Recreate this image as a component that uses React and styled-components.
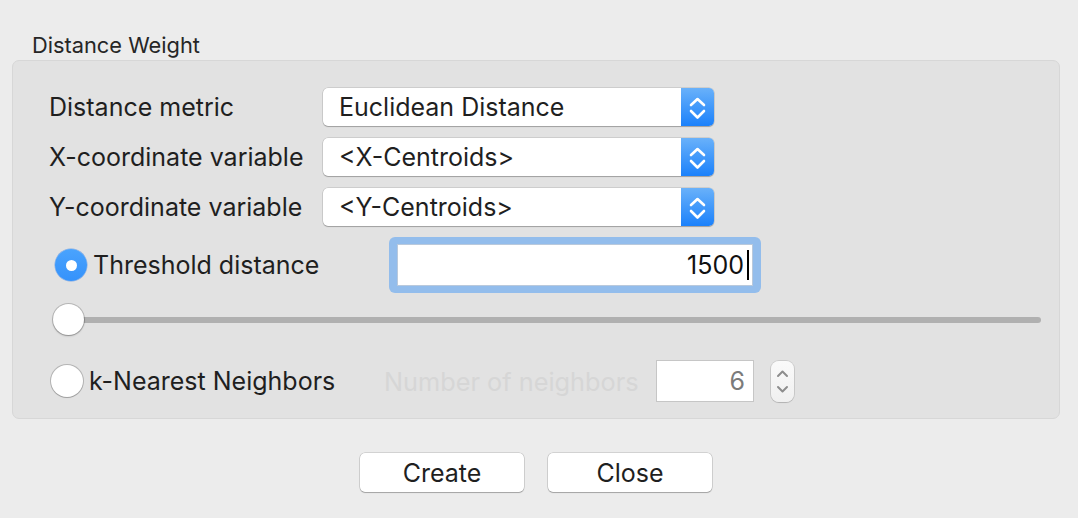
import React from 'react';
import styled, { createGlobalStyle } from 'styled-components';

const FONT = `Inter, "Liberation Sans", Arial, sans-serif`;

const GlobalStyle = createGlobalStyle`
  html, body {
    margin: 0;
    padding: 0;
    background: #ececec;
  }
  body {
    font-family: ${FONT};
    color: #222;
    -webkit-font-smoothing: antialiased;
  }
`;

const Page = styled.div`
  width: 1078px;
  height: 518px;
  padding-top: 31px;
  box-sizing: border-box;
  background: #ececec;
`;

const GroupTitle = styled.div`
  margin-left: 32px;
  font-size: 21.8px;
  line-height: 29px;
  color: #262626;
`;

const GroupBox = styled.div`
  margin-left: 12px;
  width: 1048px;
  height: 359px;
  box-sizing: border-box;
  padding: 26px 18px 0 37px;
  background: #e2e2e2;
  border: 1px solid #d7d7d7;
  border-radius: 7px;
  display: flex;
  flex-direction: column;
`;

const Row = styled.div`
  display: flex;
  align-items: center;
  height: ${p => p.$h}px;
  margin-top: ${p => p.$mt || 0}px;
  padding-left: ${p => p.$pl || 0}px;
`;

const Label = styled.div`
  width: 273px;
  margin-left: -1px;
  margin-right: 1px;
  font-size: 25px;
  color: #1f1f1f;
  white-space: nowrap;
`;

const Popup = styled.div`
  width: 391px;
  height: 38px;
  display: flex;
  background: #fff;
  border-radius: 5px;
  box-shadow: 0 0 0 0.5px rgba(0, 0, 0, 0.18), 0 1px 1px rgba(0, 0, 0, 0.22);
  overflow: hidden;
`;

const PopupText = styled.div`
  flex: 1;
  padding-left: 16px;
  font-size: 25px;
  line-height: 38px;
  color: #1f1f1f;
`;

const PopupArrows = styled.div`
  width: 33px;
  height: 38px;
  background: linear-gradient(#69b1fa, #1b81fb);
  display: flex;
  align-items: center;
  justify-content: center;
`;

const Chevrons = ({ color = '#fff', width = 2.6 }) => (
  <svg width="33" height="38" viewBox="0 0 33 38">
    <path d="M10 17 L16.5 11 L23 17" fill="none" stroke={color} strokeWidth={width} strokeLinecap="round" strokeLinejoin="round" />
    <path d="M10 23 L16.5 29.5 L23 23" fill="none" stroke={color} strokeWidth={width} strokeLinecap="round" strokeLinejoin="round" />
  </svg>
);

const Select = ({ children }) => (
  <Popup>
    <PopupText>{children}</PopupText>
    <PopupArrows>
      <Chevrons />
    </PopupArrows>
  </Popup>
);

const RadioLabel = styled.div`
  display: flex;
  align-items: center;
  gap: ${p => p.$gap}px;
  width: ${p => p.$w}px;
  font-size: 25px;
  color: #1f1f1f;
  white-space: nowrap;
`;

const RadioCircle = styled.div`
  width: 32px;
  height: 32px;
  border-radius: 50%;
  box-sizing: border-box;
  flex-shrink: 0;
  display: flex;
  align-items: center;
  justify-content: center;
  background: ${p => (p.$on ? 'linear-gradient(#4aa3fd, #3592fb)' : '#fff')};
  box-shadow: ${p =>
    p.$on
      ? '0 0 0 0.5px rgba(30, 110, 230, 0.5)'
      : '0 0 0 1px rgba(0, 0, 0, 0.2), 0 1px 1px rgba(0, 0, 0, 0.12)'};

  &::after {
    content: '';
    display: ${p => (p.$on ? 'block' : 'none')};
    width: 11px;
    height: 11px;
    border-radius: 50%;
    background: #fff;
  }
`;

const FocusRing = styled.div`
  width: 372px;
  height: 56px;
  box-sizing: border-box;
  padding: 7px 8px;
  background: #93bdec;
  border-radius: 6px;
`;

const TextField = styled.div`
  height: 42px;
  box-sizing: border-box;
  background: #fff;
  border: 1px solid #b9c9dc;
  display: flex;
  align-items: center;
  justify-content: flex-end;
  padding-right: 3px;
  font-size: 25px;
  color: #111;
`;

const Caret = styled.span`
  display: inline-block;
  width: 2px;
  height: 30px;
  margin-left: 3px;
  background: #000;
`;

const SliderWrap = styled.div`
  position: relative;
  flex: 1;
  height: 31px;
`;

const SliderTrack = styled.div`
  position: absolute;
  left: 15px;
  right: 0;
  top: 13px;
  height: 6px;
  border-radius: 3px;
  background: #b0b0b0;
`;

const SliderKnob = styled.div`
  position: absolute;
  left: 0;
  top: 0;
  width: 31px;
  height: 31px;
  border-radius: 50%;
  background: #fff;
  box-shadow: 0 0 0 1px rgba(0, 0, 0, 0.18), 0 1px 2px rgba(0, 0, 0, 0.25);
`;

const DisabledText = styled.div`
  width: 270px;
  margin-left: -2px;
  margin-right: 2px;
  font-size: 25.3px;
  color: #d6d6d6;
  white-space: nowrap;
`;

const NumberField = styled.div`
  width: 98px;
  height: 42px;
  box-sizing: border-box;
  background: #fff;
  border: 1px solid #c6c6c6;
  display: flex;
  align-items: center;
  justify-content: flex-end;
  padding-right: 8px;
  font-size: 25px;
  color: #7b7b7b;
`;

const Stepper = styled.div`
  width: 23px;
  height: 41px;
  margin-left: 17px;
  border-radius: 8px;
  background: linear-gradient(#fafafa, #f0f0f0);
  box-shadow: 0 0 0 1px rgba(0, 0, 0, 0.1), 0 1px 1px rgba(0, 0, 0, 0.12);
  display: flex;
  align-items: center;
  justify-content: center;
`;

const StepperChevrons = () => (
  <svg width="23" height="41" viewBox="0 0 23 41">
    <path d="M7 15 L11.5 10.5 L16 15" fill="none" stroke="#8d8d8d" strokeWidth="2" strokeLinecap="round" strokeLinejoin="round" />
    <path d="M7 26 L11.5 30.5 L16 26" fill="none" stroke="#8d8d8d" strokeWidth="2" strokeLinecap="round" strokeLinejoin="round" />
  </svg>
);

const ButtonBar = styled.div`
  display: flex;
  justify-content: center;
  gap: 24px;
  margin-top: 34px;
  padding-right: 6px;
`;

const Button = styled.button`
  width: 164px;
  height: 39px;
  border: none;
  border-radius: 5px;
  background: #fff;
  box-shadow: 0 0 0 0.5px rgba(0, 0, 0, 0.22), 0 1px 1px rgba(0, 0, 0, 0.22);
  font-family: ${FONT};
  font-size: 25px;
  color: #1f1f1f;
  padding: 0;
`;

export default function App() {
  return (
    <Page>
      <GlobalStyle />
      <GroupTitle>Distance Weight</GroupTitle>
      <GroupBox>
        <Row $h={39}>
          <Label>Distance metric</Label>
          <Select>Euclidean Distance</Select>
        </Row>
        <Row $h={39} $mt={11}>
          <Label>X-coordinate variable</Label>
          <Select>&lt;X-Centroids&gt;</Select>
        </Row>
        <Row $h={39} $mt={11}>
          <Label>Y-coordinate variable</Label>
          <Select>&lt;Y-Centroids&gt;</Select>
        </Row>
        <Row $h={56} $mt={11} $pl={5}>
          <RadioLabel $w={334} $gap={6}>
            <RadioCircle $on />
            Threshold distance
          </RadioLabel>
          <FocusRing>
            <TextField>
              1500
              <Caret />
            </TextField>
          </FocusRing>
        </Row>
        <Row $h={31} $mt={11} $pl={3}>
          <SliderWrap>
            <SliderTrack />
            <SliderKnob />
          </SliderWrap>
        </Row>
        <Row $h={42} $mt={25} $pl={1}>
          <RadioLabel $w={335} $gap={6}>
            <RadioCircle />
            k-Nearest Neighbors
          </RadioLabel>
          <DisabledText>Number of neighbors</DisabledText>
          <NumberField>6</NumberField>
          <Stepper>
            <StepperChevrons />
          </Stepper>
        </Row>
      </GroupBox>
      <ButtonBar>
        <Button>Create</Button>
        <Button>Close</Button>
      </ButtonBar>
    </Page>
  );
}
